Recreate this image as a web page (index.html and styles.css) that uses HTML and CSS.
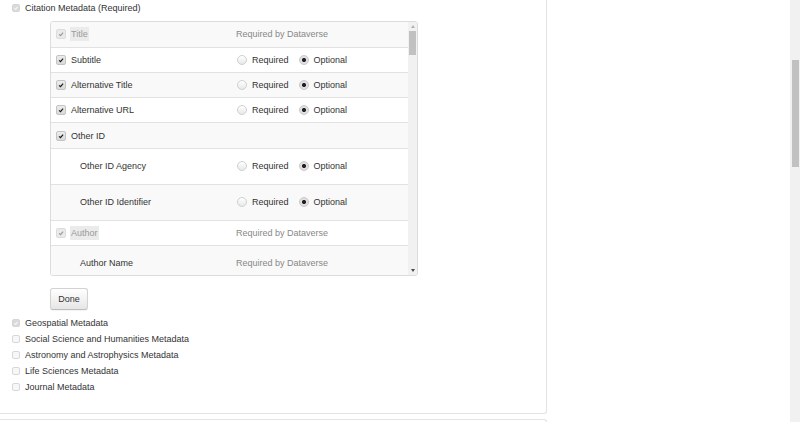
FILE: index.html
```html
<!DOCTYPE html>
<html lang="en">
<head>
    <meta charset="UTF-8">
    <title>Metadata Fields</title>
    <link rel="stylesheet" href="styles.css">
</head>
<body>
    <div class="page">
        <div class="content">
            <div class="panel">
                <div class="block-check">
                    <span class="cb cb-sm cb-locked"><svg viewBox="0 0 8 8"><path d="M1.8 4.2 L3.4 5.8 L6.3 2.4"/></svg></span>
                    Citation Metadata (Required)
                </div>

                <div class="fields">
                    <div class="fields-list">
                        <div class="field-row">
                            <div class="field-name"><span class="cb cb-locked"><svg viewBox="0 0 10 10"><path d="M2.6 5.4 L4.4 7.1 L7.6 3.4"/></svg></span><span class="name-locked">Title</span></div>
                            <div class="field-opt muted">Required by Dataverse</div>
                        </div>
                        <div class="field-row">
                            <div class="field-name"><span class="cb"><svg viewBox="0 0 10 10"><path d="M2.6 5.4 L4.4 7.1 L7.6 3.4"/></svg></span>Subtitle</div>
                            <div class="field-opt"><span class="radio"></span>Required<span class="radio on"></span>Optional</div>
                        </div>
                        <div class="field-row">
                            <div class="field-name"><span class="cb"><svg viewBox="0 0 10 10"><path d="M2.6 5.4 L4.4 7.1 L7.6 3.4"/></svg></span>Alternative Title</div>
                            <div class="field-opt"><span class="radio"></span>Required<span class="radio on"></span>Optional</div>
                        </div>
                        <div class="field-row">
                            <div class="field-name"><span class="cb"><svg viewBox="0 0 10 10"><path d="M2.6 5.4 L4.4 7.1 L7.6 3.4"/></svg></span>Alternative URL</div>
                            <div class="field-opt"><span class="radio"></span>Required<span class="radio on"></span>Optional</div>
                        </div>
                        <div class="field-row">
                            <div class="field-name"><span class="cb"><svg viewBox="0 0 10 10"><path d="M2.6 5.4 L4.4 7.1 L7.6 3.4"/></svg></span>Other ID</div>
                            <div class="field-opt"></div>
                        </div>
                        <div class="field-row tall">
                            <div class="field-name child">Other ID Agency</div>
                            <div class="field-opt"><span class="radio"></span>Required<span class="radio on"></span>Optional</div>
                        </div>
                        <div class="field-row tall">
                            <div class="field-name child">Other ID Identifier</div>
                            <div class="field-opt"><span class="radio"></span>Required<span class="radio on"></span>Optional</div>
                        </div>
                        <div class="field-row">
                            <div class="field-name"><span class="cb cb-locked"><svg viewBox="0 0 10 10"><path d="M2.6 5.4 L4.4 7.1 L7.6 3.4"/></svg></span><span class="name-locked">Author</span></div>
                            <div class="field-opt muted">Required by Dataverse</div>
                        </div>
                        <div class="field-row tall">
                            <div class="field-name child">Author Name</div>
                            <div class="field-opt muted">Required by Dataverse</div>
                        </div>
                    </div>
                    <div class="fields-scroll">
                        <span class="arrow-up"></span>
                        <span class="thumb"></span>
                        <span class="track-rest"></span>
                        <span class="arrow-down"></span>
                    </div>
                </div>

                <button class="btn">Done</button>

                <ul class="block-list">
                    <li><span class="cb cb-sm cb-locked"><svg viewBox="0 0 8 8"><path d="M1.8 4.2 L3.4 5.8 L6.3 2.4"/></svg></span>Geospatial Metadata</li>
                    <li><span class="cb cb-sm cb-empty"></span>Social Science and Humanities Metadata</li>
                    <li><span class="cb cb-sm cb-empty"></span>Astronomy and Astrophysics Metadata</li>
                    <li><span class="cb cb-sm cb-empty"></span>Life Sciences Metadata</li>
                    <li><span class="cb cb-sm cb-empty"></span>Journal Metadata</li>
                </ul>
            </div>
            <div class="panel panel-next"></div>
        </div>
        <div class="page-scroll"><div class="page-thumb"></div></div>
    </div>
</body>
</html>
```

FILE: styles.css
```css
body {
    margin: 0;
    font-family: "Liberation Sans", Arial, sans-serif;
    font-size: 9px;
    color: #333;
    background: #fff;
}
.page {
    display: flex;
    height: 100vh;
    overflow: hidden;
}
.content {
    flex: 1;
    overflow: hidden;
}

/* Panels */
.panel {
    width: 547px;
    box-sizing: border-box;
    border-right: 1px solid #e3e3e3;
    border-bottom: 1px solid #e3e3e3;
    border-bottom-right-radius: 3px;
    padding: 0 0 18.5px 12px;
}
.panel-next {
    margin-top: 5px;
    height: 40px;
    border-top: 1px solid #e3e3e3;
    border-bottom: none;
    border-radius: 0 3px 0 0;
}

/* Checkboxes */
.cb {
    display: inline-flex;
    flex: none;
    width: 10px;
    height: 10px;
    box-sizing: border-box;
    border: 1px solid #c4c4c4;
    border-radius: 2px;
    background: linear-gradient(#ececec, #d9d9d9);
}
.cb svg {
    width: 100%;
    height: 100%;
}
.cb path {
    fill: none;
    stroke: #1a1a1a;
    stroke-width: 1.5;
}
.cb-locked {
    border-color: #dcdcdc;
    background: #eaeaea;
}
.cb-locked path {
    stroke: #9a9a9a;
}
.cb-sm {
    width: 8px;
    height: 8px;
}
.cb-sm.cb-locked {
    background: #dadada;
    border-color: #d6d6d6;
}
.cb-sm.cb-locked path {
    stroke: #f4f4f4;
}
.cb-empty {
    background: #f7f7f7;
    border-color: #d9d9d9;
}

.block-check {
    display: flex;
    align-items: center;
    gap: 5px;
    height: 16px;
}

/* Field table */
.fields {
    display: flex;
    width: 368px;
    height: 255px;
    box-sizing: border-box;
    margin: 5px 0 0 38px;
    border: 1px solid #dcdcdc;
    border-radius: 3px;
    overflow: hidden;
}
.fields-list {
    flex: 1;
    overflow: hidden;
}
.field-row {
    display: grid;
    grid-template-columns: 180px 1fr;
    align-items: center;
    height: 25.3px;
    box-sizing: border-box;
    padding-left: 5px;
    border-top: 1px solid #e2e2e2;
}
.field-row:first-child {
    border-top: none;
    height: 24.5px;
}
.field-row:nth-child(odd) {
    background: #f9f9f9;
}
.field-row.tall {
    height: 36px;
}
.field-name {
    display: flex;
    align-items: center;
    gap: 5px;
}
.field-name.child {
    padding-left: 24px;
}
.name-locked {
    color: #999;
    background: #ebebeb;
    padding: 2px 1px;
    margin-left: -1px;
}
.field-opt {
    display: flex;
    align-items: center;
}
.muted {
    color: #888;
}
.radio {
    width: 10px;
    height: 10px;
    box-sizing: border-box;
    margin: 0 5px 0 1px;
    border: 1px solid #d0d0d0;
    border-radius: 50%;
    background: linear-gradient(#ffffff, #e8e8e8);
}
.radio + .radio,
.radio.on {
    margin-left: 10px;
}
.radio.on {
    border-color: #c8c8c8;
    background: radial-gradient(circle, #222 0 1.8px, #e0e0e0 2.3px);
}

/* Scrollbar of the field table */
.fields-scroll {
    display: flex;
    flex-direction: column;
    align-items: center;
    width: 9px;
    background: #f1f1f1;
}
.arrow-up,
.arrow-down {
    flex: none;
    height: 9px;
    display: flex;
    align-items: center;
    justify-content: center;
}
.arrow-up::before {
    content: "";
    border: 2.5px solid transparent;
    border-top: none;
    border-bottom: 3px solid #b4b4b4;
}
.arrow-down::before {
    content: "";
    border: 2.5px solid transparent;
    border-bottom: none;
    border-top: 3px solid #4a4a4a;
}
.thumb {
    width: 7px;
    height: 24px;
    background: #c1c1c1;
}
.track-rest {
    flex: 1;
}

/* Done button */
.btn {
    display: block;
    width: 38px;
    height: 22px;
    margin: 12px 0 0 38px;
    padding: 0;
    font: inherit;
    color: #333;
    border: 1px solid #d2d2d2;
    border-bottom-color: #bdbdbd;
    border-radius: 3px;
    background: linear-gradient(#ffffff, #e6e6e6);
    box-shadow: 0 1px 1px rgba(0, 0, 0, 0.05);
}

/* Other metadata blocks */
.block-list {
    list-style: none;
    margin: 5px 0 0;
    padding: 0;
}
.block-list li {
    display: flex;
    align-items: center;
    gap: 5px;
    height: 15.9px;
}

/* Window scrollbar */
.page-scroll {
    width: 10px;
    flex: none;
    background: #f1f1f1;
    padding-top: 60px;
    box-sizing: border-box;
}
.page-thumb {
    height: 107px;
    margin: 0 1px 0 2px;
    background: #c1c1c1;
}
```
